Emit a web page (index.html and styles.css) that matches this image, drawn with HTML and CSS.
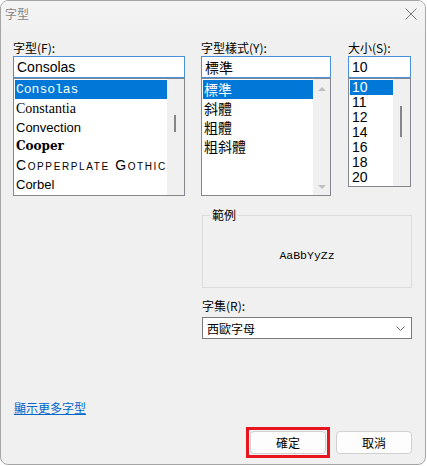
FILE: index.html
```html
<!DOCTYPE html>
<html lang="zh-Hant">
<head>
<meta charset="utf-8">
<title>字型</title>
<link rel="stylesheet" href="styles.css">
</head>
<body>
<div class="window">
  <div class="titlebar">
    <span class="title">字型</span>
    <svg class="close" width="12" height="12" viewBox="0 0 12 12"><path d="M0.5 0.5 L11.5 11.5 M11.5 0.5 L0.5 11.5" stroke="#7a7a7a" stroke-width="1" fill="none"/></svg>
  </div>
  <div class="content">
    <div class="columns">
      <div class="col col-font">
        <div class="lbl">字型(F):</div>
        <div class="input input-latin">Consolas</div>
        <div class="list list-font">
          <div class="items">
            <div class="item sel f-consolas">Consolas</div>
            <div class="item f-constantia">Constantia</div>
            <div class="item f-convection">Convection</div>
            <div class="item f-cooper">Cooper</div>
            <div class="item f-copper">Copperplate Gothic</div>
            <div class="item f-corbel">Corbel</div>
          </div>
          <div class="scrollbar"><div class="thumb thumb-font"></div></div>
        </div>
      </div>
      <div class="col col-style">
        <div class="lbl">字型樣式(Y):</div>
        <div class="input input-cjk">標準</div>
        <div class="list list-style">
          <div class="items">
            <div class="item sel">標準</div>
            <div class="item">斜體</div>
            <div class="item">粗體</div>
            <div class="item">粗斜體</div>
          </div>
          <div class="scrollbar arrows">
            <div class="arrow up"></div>
            <div class="arrow down"></div>
          </div>
        </div>
      </div>
      <div class="col col-size">
        <div class="lbl">大小(S):</div>
        <div class="input input-latin">10</div>
        <div class="list list-size">
          <div class="items">
            <div class="item sel">10</div>
            <div class="item">11</div>
            <div class="item">12</div>
            <div class="item">14</div>
            <div class="item">16</div>
            <div class="item">18</div>
            <div class="item">20</div>
          </div>
          <div class="scrollbar"><div class="thumb thumb-size"></div></div>
        </div>
      </div>
    </div>
    <div class="lower">
      <div class="group">
        <span class="group-label">範例</span>
        <div class="sample-text">AaBbYyZz</div>
      </div>
      <div class="lbl lbl-charset">字集(R):</div>
      <div class="select">
        <span>西歐字母</span>
        <svg class="chev" width="9" height="5" viewBox="0 0 9 5"><path d="M0.5 0.5 L4.5 4.5 L8.5 0.5" stroke="#6b6b6b" stroke-width="1" fill="none"/></svg>
      </div>
    </div>
    <a class="more" href="#">顯示更多字型</a>
    <div class="buttons">
      <span class="ok-frame"><button class="btn">確定</button></span>
      <button class="btn">取消</button>
    </div>
  </div>
</div>
</body>
</html>
```

FILE: styles.css
```css
* { box-sizing: border-box; }
html, body {
  margin: 0;
  padding: 0;
  background: #ffffff;
}
body {
  font-family: "Noto Sans CJK TC", "Liberation Sans", sans-serif;
  font-size: 12px;
  color: #000;
}
.window {
  width: 426px;
  height: 465px;
  border: 1px solid #a6a6a6;
  border-radius: 8px;
  background: #f0f0f0;
  overflow: hidden;
  display: flex;
  flex-direction: column;
}
.titlebar {
  height: 29px;
  background: linear-gradient(#f4f4f4, #f1f1f1);
  display: flex;
  align-items: center;
  justify-content: space-between;
  padding: 0 8px 0 4px;
}
.title {
  color: #858585;
  font-size: 12px;
  line-height: 16px;
  margin-top: -3px;
}
.close { margin-top: -3px; }
.content {
  padding: 10px 13px 0 12px;
  display: flex;
  flex-direction: column;
}
.columns {
  display: flex;
  align-items: flex-start;
}
.col { display: flex; flex-direction: column; }
.col-font { width: 172px; margin-right: 16px; }
.col-style { width: 130px; margin-right: 17px; }
.col-size { width: 63px; }
.lbl {
  line-height: 16px;
  height: 16px;
  font-size: 12px;
}
.input {
  height: 22px;
  border: 1px solid #4a8fd9;
  background: #fff;
  padding-left: 3px;
  line-height: 20px;
  white-space: nowrap;
  overflow: hidden;
}
.input-latin { font-family: "Liberation Sans", sans-serif; font-size: 14px; }
.input-cjk { font-family: "Noto Sans CJK TC", sans-serif; font-size: 14px; }
.list {
  border: 1px solid #828790;
  background: #fff;
  display: flex;
}
.list-font, .list-style { height: 118px; }
.list-size { height: 109px; }
.items {
  flex: 1;
  padding: 1px 0 0 1px;
  overflow: hidden;
}
.item {
  height: 19px;
  line-height: 19px;
  padding-left: 1px;
  white-space: nowrap;
  overflow: hidden;
}
.item.sel { background: #0078d7; color: #fff; }
.list-style .item { font-size: 14px; }
.list-size .item {
  height: 15px;
  line-height: 15px;
  font-family: "Liberation Sans", sans-serif;
  font-size: 14px;
  padding-left: 2px;
}
.f-consolas { font-family: "Liberation Mono", monospace; font-size: 13px; }
.f-constantia { font-family: "Liberation Serif", serif; font-size: 14px; }
.f-convection { font-family: "Liberation Sans", sans-serif; font-size: 13px; }
.f-cooper { font-family: "DejaVu Serif", serif; font-weight: 900; font-size: 12px; }
.f-copper {
  font-family: "Liberation Sans", sans-serif;
  font-variant: small-caps;
  font-size: 14px;
  letter-spacing: 1.6px;
  font-weight: 400;
}
.f-corbel { font-family: "Liberation Sans", sans-serif; font-size: 13px; }
.scrollbar {
  width: 17px;
  background: #f0f0f0;
  position: relative;
  flex: none;
}
.thumb {
  position: absolute;
  left: 7px;
  width: 2px;
  background: #858585;
}
.thumb-font { top: 36px; height: 17px; }
.thumb-size { top: 27px; height: 31px; }
.arrows {
  display: flex;
  flex-direction: column;
  justify-content: space-between;
  padding: 8px 0 6px;
  align-items: center;
}
.arrow {
  width: 0;
  height: 0;
  border-left: 4px solid transparent;
  border-right: 4px solid transparent;
}
.arrow.up { border-bottom: 4px solid #bfbfbf; }
.arrow.down { border-top: 4px solid #bfbfbf; }
.lower {
  margin-left: 189px;
  width: 210px;
  margin-top: 19px;
  display: flex;
  flex-direction: column;
}
.group {
  height: 73px;
  border: 1px solid #dcdcdc;
  position: relative;
  padding-top: 32px;
  text-align: center;
}
.group-label {
  position: absolute;
  left: 7px;
  top: -9px;
  line-height: 16px;
  padding: 0 2px;
  background: #f0f0f0;
}
.sample-text {
  font-family: "Liberation Mono", monospace;
  font-size: 11.5px;
  line-height: 16px;
}
.lbl-charset { margin-top: 10px; }
.select {
  margin-top: 3px;
  height: 22px;
  border: 1px solid #7a7a7a;
  background: #fff;
  display: flex;
  align-items: center;
  justify-content: space-between;
  padding: 0 6px 0 4px;
  font-size: 12px;
}
.more {
  margin-top: 61px;
  margin-left: 1px;
  line-height: 16px;
  color: #0066cc;
  text-decoration: underline;
  align-self: flex-start;
}
.buttons {
  margin-top: 15px;
  display: flex;
  justify-content: flex-end;
  align-items: flex-start;
  gap: 10px;
}
.ok-frame {
  display: flex;
  margin: -4px;
  padding: 1px;
  border: 3px solid #e8151f;
}
.btn {
  width: 76px;
  height: 23px;
  border: 1px solid #d0d0d0;
  border-radius: 4px;
  background: #fdfdfd;
  font-family: "Noto Sans CJK TC", sans-serif;
  font-size: 12px;
  color: #000;
  padding: 0;
}
```
